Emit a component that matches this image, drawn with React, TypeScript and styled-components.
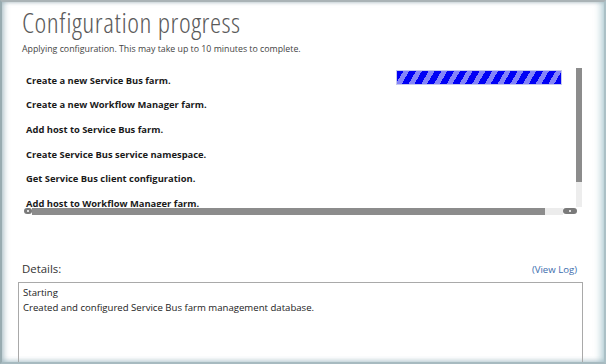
import React from "react";
import styled, { createGlobalStyle } from "styled-components";

const Global = createGlobalStyle`
  html, body { margin: 0; padding: 0; background: #ffffff; overflow: hidden; }
  #root { width: 606px; height: 364px; }
`;

const Frame = styled.div`
  box-sizing: border-box;
  width: 606px;
  height: 364px;
  background: #fff;
  border-top: 2px solid #aab3b6;
  border-left: 2px solid #98abb0;
  border-right: 2px solid #abc0c6;
  border-bottom: 2px solid #a7bac0;
  box-shadow: inset 5px 0 5px -2px rgba(130, 160, 170, 0.45),
    inset -6px 0 6px -2px rgba(150, 185, 195, 0.55),
    inset 0 -3px 4px -1px rgba(150, 180, 190, 0.45),
    inset 0 2px 3px -1px rgba(150, 160, 165, 0.35);
  font-family: "Segoe UI", "Open Sans", "Noto Sans", sans-serif;
  display: flex;
  flex-direction: column;
  padding: 0 21px 0 16px;
  overflow: hidden;
`;

const Title = styled.h1`
  margin: 0;
  padding: 2px 0 0 4px;
  font-weight: 300;
  font-size: 28px;
  font-stretch: 85%;
  letter-spacing: 0.55px;
  line-height: 36px;
  color: #5a5a5a;
`;

const Subtitle = styled.div`
  padding: 3px 0 0 4px;
  font-size: 8.8px;
  line-height: 12px;
  color: #444;
`;

const ListBox = styled.div`
  margin-top: 13px;
  margin-left: 2px;
  height: 147px;
  display: flex;
  flex-direction: column;
`;

const ListMain = styled.div`
  display: flex;
  flex: 1;
  min-height: 0;
`;

const Steps = styled.div`
  flex: 1;
  overflow: hidden;
  padding: 0 0 0 6px;
  display: flex;
  flex-direction: column;
`;

const Step = styled.div`
  display: flex;
  align-items: center;
  justify-content: space-between;
  height: 24.6px;
  flex-shrink: 0;
  font-size: 9.4px;
  font-weight: 700;
  color: #1a1a1a;
  padding-right: 14px;
`;

const Progress = styled.div`
  width: 164px;
  height: 13px;
  margin-top: -5px;
  border: 1px solid #c6c8ee;
  background: repeating-linear-gradient(
    -60deg,
    #0000f5 0px,
    #0000f5 6px,
    #8484f8 6px,
    #8484f8 11px
  );
`;

const VScroll = styled.div`
  width: 6px;
  margin-right: 1px;
  display: flex;
  flex-direction: column;
`;

const VThumb = styled.div`
  height: 114px;
  background: #8c8c8c;
`;

const VTrack = styled.div`
  flex: 1;
  background: #ededed;
`;

const HScroll = styled.div`
  height: 8px;
  display: flex;
  align-items: center;
  padding: 0 6px 0 4px;
`;

const Arrow = styled.div<{ $w: number }>`
  width: ${(p) => p.$w}px;
  height: 6px;
  border-radius: 3px;
  background: #7a7a7a;
  display: flex;
  align-items: center;
  justify-content: center;
  &::after {
    content: "";
    width: 2px;
    height: 2px;
    background: #e0e0e0;
  }
`;

const HThumb = styled.div`
  width: 513px;
  height: 7px;
  background: #8c8c8c;
`;

const HTrack = styled.div`
  flex: 1;
  height: 7px;
  background: #ececec;
`;

const DetailsHeader = styled.div`
  margin-top: 46px;
  display: flex;
  justify-content: space-between;
  align-items: baseline;
  padding: 0 0 0 4px;
`;

const DetailsLabel = styled.div`
  font-size: 11.4px;
  color: #333;
`;

const ViewLog = styled.a`
  font-size: 9.6px;
  color: #3d6eae;
  text-decoration: none;
  margin-right: 6px;
`;

const DetailsBox = styled.div`
  margin-top: 6px;
  flex: 1;
  border: 1px solid #a9a9a9;
  border-bottom: none;
  padding: 2px 4px;
  font-size: 9.6px;
  line-height: 15px;
  color: #222;
`;

const steps = [
  "Create a new Service Bus farm.",
  "Create a new Workflow Manager farm.",
  "Add host to Service Bus farm.",
  "Create Service Bus service namespace.",
  "Get Service Bus client configuration.",
  "Add host to Workflow Manager farm.",
];

export default function App() {
  return (
    <>
      <Global />
      <Frame>
        <Title>Configuration progress</Title>
        <Subtitle>Applying configuration. This may take up to 10 minutes to complete.</Subtitle>
        <ListBox>
          <ListMain>
            <Steps>
              {steps.map((s, i) => (
                <Step key={s}>
                  <span>{s}</span>
                  {i === 0 && <Progress />}
                </Step>
              ))}
            </Steps>
            <VScroll>
              <VThumb />
              <VTrack />
            </VScroll>
          </ListMain>
          <HScroll>
            <Arrow $w={8} />
            <HThumb />
            <HTrack />
            <Arrow $w={14} />
          </HScroll>
        </ListBox>
        <DetailsHeader>
          <DetailsLabel>Details:</DetailsLabel>
          <ViewLog>(View Log)</ViewLog>
        </DetailsHeader>
        <DetailsBox>
          Starting
          <br />
          Created and configured Service Bus farm management database.
        </DetailsBox>
      </Frame>
    </>
  );
}
